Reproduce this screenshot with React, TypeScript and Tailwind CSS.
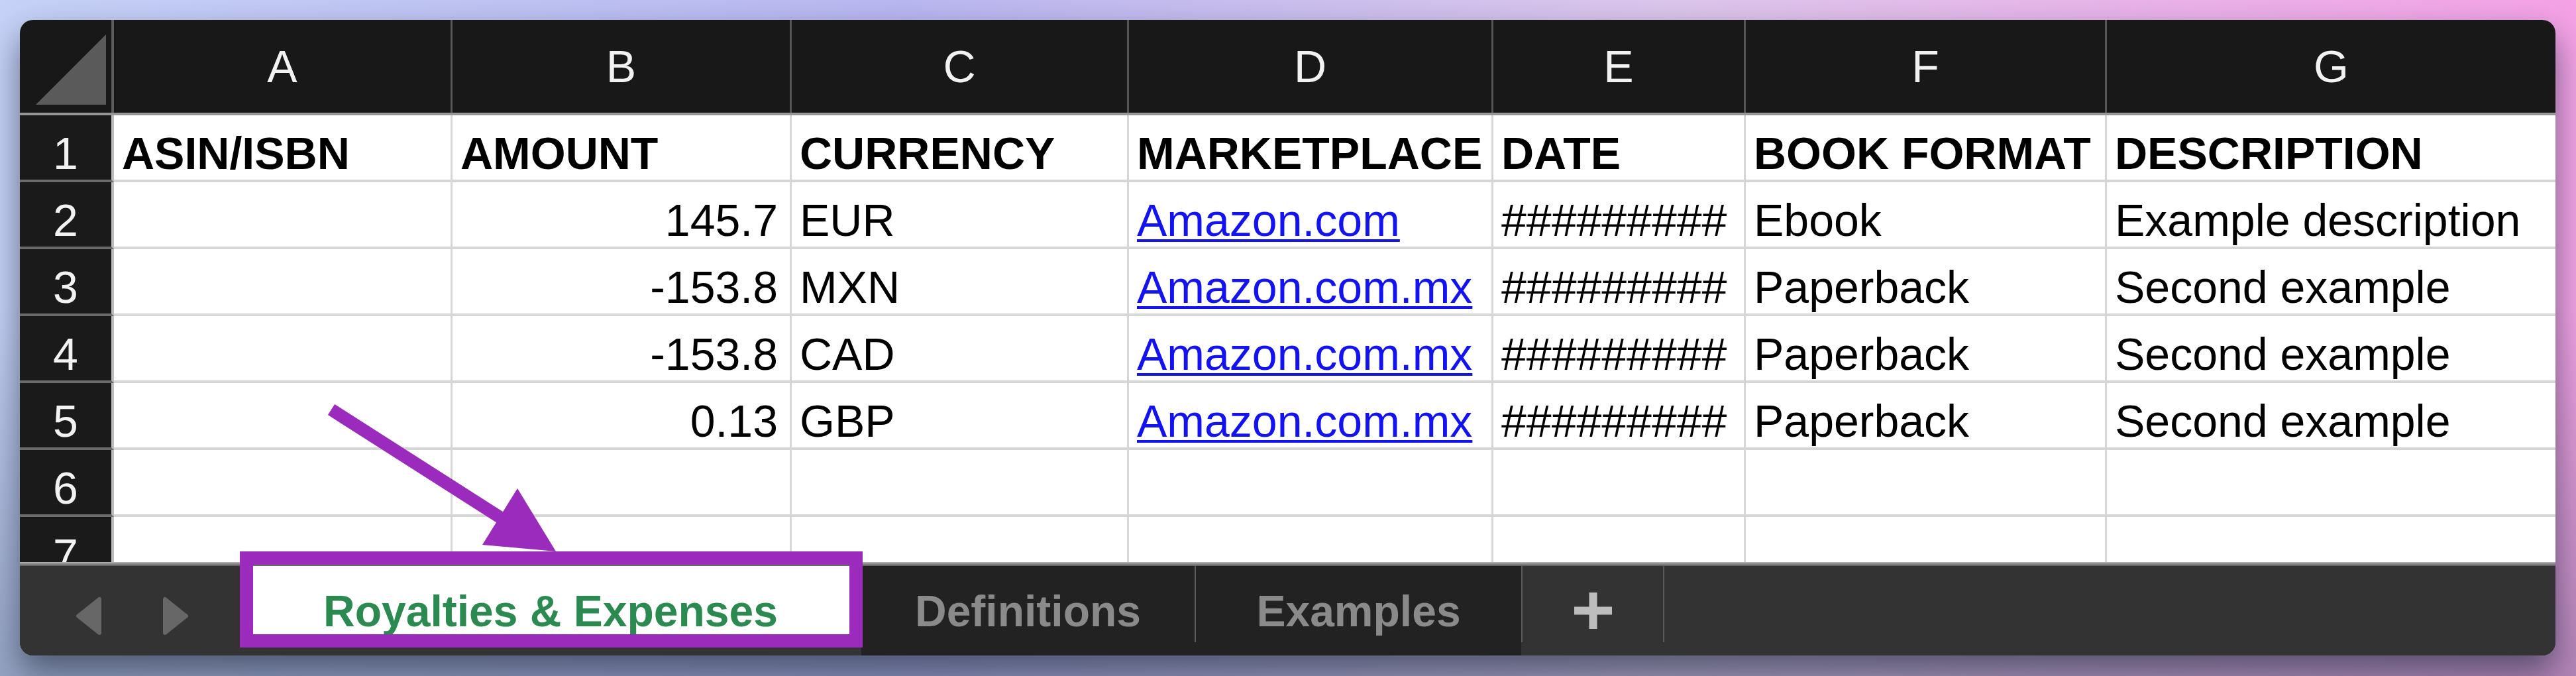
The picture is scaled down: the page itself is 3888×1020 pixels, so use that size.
import React from 'react';

const columns = [
  { letter: 'A', w: 'w-[511px]' },
  { letter: 'B', w: 'w-[512px]' },
  { letter: 'C', w: 'w-[509px]' },
  { letter: 'D', w: 'w-[550px]' },
  { letter: 'E', w: 'w-[381px]' },
  { letter: 'F', w: 'w-[545px]' },
  { letter: 'G', w: 'w-[677px]' },
];

const HASH = '#########';

const rows: string[][] = [
  ['ASIN/ISBN', 'AMOUNT', 'CURRENCY', 'MARKETPLACE', 'DATE', 'BOOK FORMAT', 'DESCRIPTION'],
  ['', '145.7', 'EUR', 'Amazon.com', HASH, 'Ebook', 'Example description'],
  ['', '-153.8', 'MXN', 'Amazon.com.mx', HASH, 'Paperback', 'Second example'],
  ['', '-153.8', 'CAD', 'Amazon.com.mx', HASH, 'Paperback', 'Second example'],
  ['', '0.13', 'GBP', 'Amazon.com.mx', HASH, 'Paperback', 'Second example'],
  ['', '', '', '', '', '', ''],
  ['', '', '', '', '', '', ''],
];

const HeaderRow = () => (
  <div className="flex h-[140px] shrink-0 bg-[#181818]">
    <div className="w-[142px] h-full border-r-[4px] border-[#5a5a5a]">
      <svg viewBox="0 0 138 140" className="w-full h-full">
        <polygon points="24,128 130,128 130,22" fill="#5a5a5a" />
      </svg>
    </div>
    {columns.map((c, i) => (
      <div
        key={c.letter}
        className={`${c.w} h-full flex items-center justify-center text-[68px] leading-none text-[#f2f2f2] ${
          i < columns.length - 1 ? 'border-r-[3px] border-[#555555]' : ''
        }`}
      >
        {c.letter}
      </div>
    ))}
  </div>
);

const Cell = ({ value, col, row }: { value: string; col: number; row: number }) => {
  const isHeader = row === 0;
  const isLink = col === 3 && row > 0 && value !== '';
  const rightAlign = col === 1 && row > 0;
  return (
    <div
      className={`${columns[col].w} h-full shrink-0 flex items-end pb-[6px] bg-white border-b-[4px] border-[#d6d6d6] overflow-hidden whitespace-nowrap ${
        col < columns.length - 1 ? 'border-r-[3px]' : ''
      } ${rightAlign ? 'justify-end pr-[18px]' : 'pl-[12px]'}`}
    >
      {isLink ? (
        <span className="text-[68px] leading-none text-[#1212f2] underline decoration-4 underline-offset-[5px]">
          {value}
        </span>
      ) : (
        <span className={`text-[68px] leading-none text-black ${isHeader ? 'font-bold' : ''}`}>{value}</span>
      )}
    </div>
  );
};

const DataRow = ({ cells, index }: { cells: string[]; index: number }) => (
  <div className="flex h-[101px] shrink-0">
    <div className="w-[142px] h-full shrink-0 bg-[#1a1a1a] border-r-[4px] border-r-[#bdbdbd] border-b-[4px] border-b-[#6b6b6b] flex items-end justify-center pb-[6px] text-[68px] leading-none text-[#f2f2f2]">
      {index + 1}
    </div>
    {cells.map((v, i) => (
      <Cell key={i} value={v} col={i} row={index} />
    ))}
  </div>
);

const Divider = () => <div className="w-[2px] h-[115px] shrink-0 bg-[#5b5b5b]" />;

const TabBar = () => (
  <div className="flex flex-col h-[141px] shrink-0">
    <div className="h-[6px] bg-linear-to-b from-[#b8b8b8] to-[#5c5c5c]" />
    <div className="flex h-[135px]">
      {/* nav arrows */}
      <div className="w-[332px] h-full bg-[#333333] flex items-start pt-[46px] pl-[84px] gap-[91px]">
        <svg width="40" height="59" viewBox="-1 -1 40 59">
          <polygon points="3,28.5 35,3 35,54" fill="#676767" stroke="#676767" strokeWidth="6" strokeLinejoin="round" />
        </svg>
        <svg width="40" height="59" viewBox="-1 -1 40 59">
          <polygon points="3,3 3,54 35,28.5" fill="#676767" stroke="#676767" strokeWidth="6" strokeLinejoin="round" />
        </svg>
      </div>
      {/* selected tab */}
      <div className="w-[938px] h-full bg-[#333333]">
        <div className="h-[104px] bg-white flex justify-center pt-[35px] text-[66px] leading-none font-bold text-[#2a8a4f]">
          Royalties &amp; Expenses
        </div>
      </div>
      <div className="w-[503px] h-full bg-[#222222] flex justify-center pt-[35px] text-[66px] leading-none font-bold text-[#8a8a8a]">
        Definitions
      </div>
      <div className="h-full bg-[#222222] flex items-start">
        <Divider />
      </div>
      <div className="w-[491px] h-full bg-[#222222] flex justify-center pt-[35px] text-[66px] leading-none font-bold text-[#8a8a8a]">
        Examples
      </div>
      <div className="h-full bg-[#333333] flex items-start">
        <Divider />
      </div>
      <div className="w-[212px] h-full bg-[#333333] flex items-center justify-center">
        <svg width="57" height="55" viewBox="0 0 57 55">
          <rect x="22.5" y="0" width="12" height="55" fill="#bdbdbd" />
          <rect x="0" y="21.5" width="57" height="12" fill="#bdbdbd" />
        </svg>
      </div>
      <div className="h-full bg-[#333333] flex items-start">
        <Divider />
      </div>
      <div className="flex-1 h-full bg-[#333333]" />
    </div>
  </div>
);

export default function App() {
  return (
    <div className="relative w-[3888px] h-[1020px] overflow-hidden p-[30px] font-['Liberation_Sans',Arial,Helvetica,sans-serif] bg-[linear-gradient(180deg,rgba(60,80,100,0)_45%,rgba(60,80,100,0.35)_100%),linear-gradient(90deg,#c6d2f7_0%,#b9b7f0_35%,#dcc6ec_65%,#f5a2e6_100%)]">
      <div className="w-[3827px] h-[959px] rounded-[20px] overflow-hidden flex flex-col bg-[#333333] shadow-[0_25px_50px_rgba(30,40,60,0.6)]">
        <div className="h-[818px] shrink-0 overflow-hidden flex flex-col bg-white">
          <HeaderRow />
          <div className="h-[4px] shrink-0 bg-[#969696]" />
          {rows.map((r, i) => (
            <DataRow key={i} cells={r} index={i} />
          ))}
        </div>
        <TabBar />
      </div>

      {/* annotation: highlight box around the active sheet tab */}
      <div className="absolute left-[362px] top-[832px] w-[940px] h-[145px] border-[20px] border-[#9b2bbd] pointer-events-none" />

      {/* annotation arrow */}
      <svg className="absolute left-0 top-0 pointer-events-none" width="3888" height="1020" viewBox="0 0 3888 1020">
        <line x1="500" y1="618" x2="760" y2="784" stroke="#9b2bbd" strokeWidth="19" />
        <polygon points="781,737 728,822 839,832" fill="#9b2bbd" />
      </svg>
    </div>
  );
}
